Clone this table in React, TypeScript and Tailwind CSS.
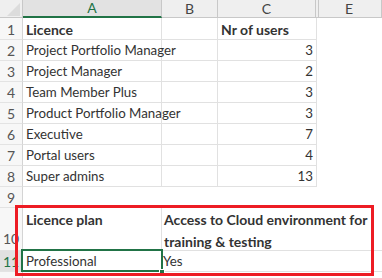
import React from "react";

const F = "font-['Lato',sans-serif]";

function RowHead({ n, h, green, align = "center" }: { n: string; h: string; green?: boolean; align?: string }) {
  return (
    <div
      className={`w-[23px] shrink-0 ${h} border-r border-b border-r-[#d4d4d4] border-b-[#e3e3e3] flex justify-center ${
        align === "end" ? "items-end pb-[1px]" : "items-center pt-[1px]"
      } text-[14px] ${green ? "bg-[#e1e1e1] text-[#217346]" : "bg-[#f7f7f7] text-[#555]"}`}
    >
      {n}
    </div>
  );
}

const data: [string, string][] = [
  ["Project Portfolio Manager", "3"],
  ["Project Manager", "2"],
  ["Team Member Plus", "3"],
  ["Product Portfolio Manager", "3"],
  ["Executive", "7"],
  ["Portal users", "4"],
  ["Super admins", "13"],
];

export default function App() {
  return (
    <div className={`relative w-[382px] h-[278px] overflow-hidden bg-white text-[#333] ${F}`}>
      {/* column headers */}
      <div className="flex h-[18px] bg-[#efefef] text-[14px] text-[#444]">
        <div className="w-[23px] shrink-0 border-r border-b border-[#c8c8c8] relative">
          <svg className="absolute left-[7px] top-[3px]" width="13" height="13" viewBox="0 0 13 13">
            <polygon points="13,0 13,13 0,13" fill="#dcdcdc" />
          </svg>
        </div>
        <div className="w-[139px] shrink-0 border-r border-r-[#c8c8c8] border-b-2 border-b-[#217346] bg-[#e2e2e2] text-[#217346] flex items-center justify-center leading-none">
          A
        </div>
        <div className="w-[56px] shrink-0 border-r border-b border-[#c8c8c8] flex items-center justify-center leading-none">B</div>
        <div className="w-[98px] shrink-0 border-r border-b border-[#c8c8c8] flex items-center justify-center leading-none">C</div>
        <div className="w-[3px] shrink-0 border-r border-b border-[#c8c8c8]" />
        <div className="flex-1 border-r border-b border-[#c8c8c8] flex items-center justify-center leading-none pr-[2px]">E</div>
      </div>

      {/* row 1 */}
      <div className="flex h-[22px] text-[14px]">
        <RowHead n="1" h="h-[22px]" />
        <div className="w-[139px] shrink-0 border-r border-b border-[#e1e1e1] pl-[3px] pt-[1px] font-bold flex items-center">Licence</div>
        <div className="w-[56px] shrink-0 border-r border-b border-[#e1e1e1]" />
        <div className="w-[99px] shrink-0 border-r border-b border-[#e1e1e1] pl-[3px] pt-[1px] font-bold flex items-center">Nr of users</div>
      </div>

      {data.map(([name, n], i) => (
        <div key={i} className="flex h-[21px] text-[13.3px]">
          <RowHead n={String(i + 2)} h="h-[21px]" />
          <div className="w-[139px] shrink-0 border-r border-b border-[#e1e1e1] pl-[3px] pt-[2px] flex items-center whitespace-nowrap">{name}</div>
          <div className="w-[56px] shrink-0 border-r border-b border-[#e1e1e1]" />
          <div className="w-[99px] shrink-0 border-r border-b border-[#e1e1e1] pr-[3px] pt-[2px] flex items-center justify-end">{n}</div>
        </div>
      ))}

      {/* row 9 */}
      <div className="flex h-[21px] text-[14px]">
        <RowHead n="9" h="h-[21px]" />
      </div>

      {/* row 10 */}
      <div className="flex h-[43px] text-[14px]">
        <RowHead n="10" h="h-[43px]" align="end" />
        <div className="w-[139px] shrink-0 border-r border-b border-[#e1e1e1] pl-[3px] pt-[1px] font-bold leading-[22px]">Licence plan</div>
        <div className="flex-1 border-b border-[#e1e1e1] pl-[2px] pt-[1px] font-bold leading-[22px] whitespace-nowrap">
          Access to Cloud environment for
          <br />
          training &amp; testing
        </div>
      </div>

      {/* row 11 */}
      <div className="flex h-[21px] text-[13.3px]">
        <RowHead n="11" h="h-[21px]" green />
        <div className="relative w-[139px] shrink-0 border-r border-b border-[#e1e1e1] pl-[3px] pt-[2px] flex items-center">
          Professional
          <div className="absolute -left-[2px] -top-[2px] -right-[2px] -bottom-[1px] border-2 border-[#217346]" />
          <div className="absolute -right-[4px] -bottom-[4px] w-[6px] h-[6px] bg-[#217346] border border-white" />
        </div>
        <div className="flex-1 border-b border-[#e1e1e1] pl-[1px] pt-[2px] flex items-center">Yes</div>
      </div>

      {/* row 12 (cut off) */}
      <div className="flex h-[21px]">
        <div className="w-[23px] shrink-0 h-[21px] border-r border-r-[#d4d4d4] bg-[#f7f7f7]" />
      </div>

      {/* red highlight rectangle */}
      <div className="absolute left-[15px] top-[205px] w-[359px] h-[71px] border-[3px] border-[#ed1c24]" />
    </div>
  );
}
